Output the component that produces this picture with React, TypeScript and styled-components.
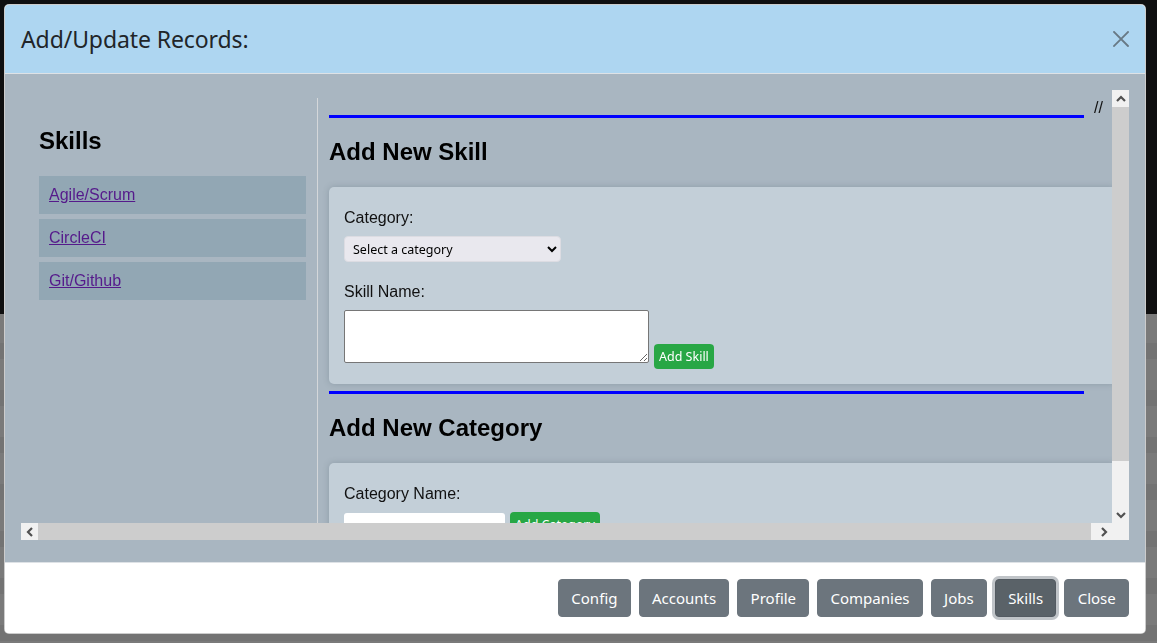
import React from 'react';
import styled, { createGlobalStyle } from 'styled-components';

const GlobalStyle = createGlobalStyle`
  html, body {
    margin: 0;
    padding: 0;
    height: 100%;
    overflow: hidden;
  }
  body {
    font-family: 'Liberation Sans', Arial, sans-serif;
  }
`;

const Page = styled.div`
  height: 643px;
  display: flex;
  flex-direction: column;
`;

const PageTop = styled.div`
  height: 314px;
  background: #0f0f10;
`;

const PageRest = styled.div`
  flex: 1;
  background: repeating-linear-gradient(
    to bottom,
    #7a7a7a 0px,
    #7a7a7a 31px,
    #737373 31px,
    #737373 47px
  );
  background-position: 0 -2px;
`;

const Overlay = styled.div`
  position: fixed;
  inset: 0;
  display: flex;
  align-items: flex-start;
  padding: 4px 0 0 4px;
`;

const Modal = styled.div`
  width: 1142px;
  background: #fff;
  border: 1px solid rgba(0, 0, 0, 0.2);
  border-radius: 5px;
  overflow: hidden;
  display: flex;
  flex-direction: column;
  box-sizing: border-box;
`;

const Header = styled.div`
  height: 69px;
  box-sizing: border-box;
  background: #aed6f1;
  border-bottom: 1px solid #dee2e6;
  display: flex;
  align-items: center;
  justify-content: space-between;
  padding: 0 15px 0 16px;
`;

const Title = styled.h5`
  margin: 0;
  font-family: 'Noto Sans', 'Open Sans', sans-serif;
  font-weight: 400;
  font-size: 23px;
  color: #212529;
  letter-spacing: -0.1px;
`;

const CloseX = styled.button`
  border: none;
  background: transparent;
  padding: 0;
  width: 18px;
  height: 18px;
  display: flex;
  align-items: center;
  justify-content: center;
  cursor: pointer;
`;

const Body = styled.div`
  background: #a9b6c1;
  padding: 16px 16px 22px 16px;
`;

/* scroll area: viewport plus drawn scrollbars */
const ScrollFrame = styled.div`
  height: 450px;
  display: grid;
  grid-template-columns: 1fr 17px;
  grid-template-rows: 1fr 17px;
`;

const Viewport = styled.div`
  overflow: hidden;
  min-width: 0;
  min-height: 0;
`;

const Bar = styled.div<{ $vertical?: boolean }>`
  display: flex;
  flex-direction: ${(p) => (p.$vertical ? 'column' : 'row')};
  background: #f1f1f1;
`;

const ArrowButton = styled.div`
  flex: none;
  width: 17px;
  height: 17px;
  display: flex;
  align-items: center;
  justify-content: center;
  background: #f1f1f1;
`;

const Thumb = styled.div<{ $vertical?: boolean; $size: number }>`
  flex: none;
  background: #cdcdcd;
  ${(p) => (p.$vertical ? `height: ${p.$size}px;` : `width: ${p.$size}px;`)}
`;

const Track = styled.div`
  flex: 1;
`;

const Corner = styled.div`
  background: #f1f1f1;
`;

const chevrons: Record<string, string> = {
  up: 'M1 6 L5 2 L9 6',
  down: 'M1 2 L5 6 L9 2',
  left: 'M6 1 L2 5 L6 9',
  right: 'M2 1 L6 5 L2 9',
};

const Chevron = ({ dir }: { dir: 'up' | 'down' | 'left' | 'right' }) => {
  const flat = dir === 'up' || dir === 'down';
  return (
    <svg width={flat ? 10 : 8} height={flat ? 8 : 10} viewBox={flat ? '0 0 10 8' : '0 0 8 10'}>
      <path d={chevrons[dir]} fill="none" stroke="#505050" strokeWidth="2.2" />
    </svg>
  );
};

const Row = styled.div`
  width: calc(100% + 4px);
  display: flex;
  margin-top: 8px;
`;

const Sidebar = styled.div`
  width: 297px;
  flex: none;
  box-sizing: border-box;
  padding: 29px 11px 0 18px;
  border-right: 1px solid #d4d7da;
`;

const SideTitle = styled.h3`
  margin: 0 0 21px 0;
  font-size: 24px;
  font-weight: 700;
  color: #000;
`;

const SkillList = styled.div`
  display: flex;
  flex-direction: column;
  gap: 5px;
`;

const SkillItem = styled.div`
  background: #92a7b4;
  padding: 10px;
  font-size: 16px;
  line-height: 18px;
`;

const SkillLink = styled.a`
  color: #551a8b;
  text-decoration: underline;
`;

const Main = styled.div`
  flex: 1;
  min-width: 0;
  padding: 0 0 20px 11px;
`;

const Rule = styled.div<{ $top?: number }>`
  display: flex;
  align-items: flex-end;
  margin-top: ${(p) => p.$top ?? 0}px;
  padding-right: 13px;
`;

const BlueLine = styled.div<{ $trail?: number }>`
  flex: 1;
  height: 3px;
  background: #0000ff;
  margin-right: ${(p) => p.$trail ?? 0}px;
`;

const RuleNote = styled.span`
  margin-left: 10px;
  font-size: 16px;
  line-height: 18px;
  color: #111;
  position: relative;
  top: -1px;
`;

const SectionTitle = styled.h2`
  margin: 20px 0 21px 0;
  font-size: 24px;
  font-weight: 700;
  line-height: 28px;
  color: #000;
`;

const Card = styled.div`
  background: #c3cfd8;
  border-radius: 5px;
  box-shadow: 0 0 6px rgba(60, 80, 95, 0.25);
  padding: 22px 15px 21px 15px;
  margin-bottom: 7px;
`;

const Field = styled.div<{ $gap?: number }>`
  margin-bottom: ${(p) => p.$gap ?? 0}px;
`;

const Label = styled.label`
  display: block;
  font-size: 16px;
  line-height: 18px;
  color: #111;
  margin-bottom: 9px;
`;

const Select = styled.select`
  display: block;
  width: 217px;
  height: 26px;
  border: 1px solid #dcdce2;
  border-radius: 4px;
  background: #e9e8ee;
  font-family: 'Noto Sans', 'Open Sans', sans-serif;
  font-size: 12.5px;
  color: #000;
  padding: 0 4px;
`;

const InputLine = styled.div`
  display: flex;
  align-items: flex-end;
  gap: 5px;
`;

const TextArea = styled.textarea`
  display: block;
  width: 305px;
  height: 53px;
  box-sizing: border-box;
  border: 1px solid #767676;
  border-radius: 2px;
  background: #fff;
  resize: both;
  margin: 0;
`;

const TextInput = styled.input`
  width: 161px;
  height: 24px;
  box-sizing: border-box;
  border: none;
  border-radius: 3px;
  background: #fff;
  margin: 0;
`;

const GreenButton = styled.button<{ $drop?: number }>`
  background: #28a745;
  color: #fff;
  border: none;
  border-radius: 4px;
  font-family: 'Noto Sans', 'Open Sans', sans-serif;
  font-size: 12.5px;
  height: 25px;
  padding: 0 5px;
  margin-bottom: ${(p) => -(p.$drop ?? 0)}px;
  cursor: pointer;
`;

const Footer = styled.div`
  border-top: 1px solid #dee2e6;
  background: #fff;
  padding: 12px;
  display: flex;
  justify-content: flex-end;
  align-items: center;
`;

const NavButton = styled.button<{ $active?: boolean }>`
  margin: 4px;
  height: 38px;
  padding: 0 12.25px;
  border-radius: 4px;
  border: 1px solid ${(p) => (p.$active ? '#545b62' : '#6c757d')};
  background: ${(p) => (p.$active ? '#5a6268' : '#6c757d')};
  color: #fff;
  font-family: 'Noto Sans', 'Open Sans', sans-serif;
  font-size: 15px;
  cursor: pointer;
  box-shadow: ${(p) => (p.$active ? '0 0 0 3px rgba(171, 176, 181, 0.75)' : 'none')};
`;

const skills = ['Agile/Scrum', 'CircleCI', 'Git/Github'];
const navItems = ['Config', 'Accounts', 'Profile', 'Companies', 'Jobs', 'Skills', 'Close'];

export default function App() {
  return (
    <>
      <GlobalStyle />
      <Page>
        <PageTop />
        <PageRest />
      </Page>
      <Overlay>
        <Modal>
          <Header>
            <Title>Add/Update Records:</Title>
            <CloseX aria-label="Close">
              <svg width="16" height="16" viewBox="0 0 16 16">
                <path d="M1 1 L15 15 M15 1 L1 15" stroke="#687985" strokeWidth="1.8" strokeLinecap="square" />
              </svg>
            </CloseX>
          </Header>
          <Body>
            <ScrollFrame>
              <Viewport>
                <Row>
                  <Sidebar>
                    <SideTitle>Skills</SideTitle>
                    <SkillList>
                      {skills.map((s) => (
                        <SkillItem key={s}>
                          <SkillLink href="#">{s}</SkillLink>
                        </SkillItem>
                      ))}
                    </SkillList>
                  </Sidebar>
                  <Main>
                    <Rule $top={2}>
                      <BlueLine />
                      <RuleNote>//</RuleNote>
                    </Rule>
                    <SectionTitle>Add New Skill</SectionTitle>
                    <Card>
                      <Field $gap={21}>
                        <Label>Category:</Label>
                        <Select defaultValue="">
                          <option value="">Select a category</option>
                        </Select>
                      </Field>
                      <Field>
                        <Label>Skill Name:</Label>
                        <InputLine>
                          <TextArea />
                          <GreenButton $drop={6}>Add Skill</GreenButton>
                        </InputLine>
                      </Field>
                    </Card>
                    <Rule>
                      <BlueLine $trail={19} />
                    </Rule>
                    <SectionTitle>Add New Category</SectionTitle>
                    <Card>
                      <Field>
                        <Label>Category Name:</Label>
                        <InputLine>
                          <TextInput />
                          <GreenButton>Add Category</GreenButton>
                        </InputLine>
                      </Field>
                    </Card>
                  </Main>
                </Row>
              </Viewport>
              <Bar $vertical>
                <ArrowButton>
                  <Chevron dir="up" />
                </ArrowButton>
                <Thumb $vertical $size={354} />
                <Track />
                <ArrowButton>
                  <Chevron dir="down" />
                </ArrowButton>
              </Bar>
              <Bar>
                <ArrowButton>
                  <Chevron dir="left" />
                </ArrowButton>
                <Thumb $size={1053} />
                <Track />
                <ArrowButton>
                  <Chevron dir="right" />
                </ArrowButton>
              </Bar>
              <Corner />
            </ScrollFrame>
          </Body>
          <Footer>
            {navItems.map((n) => (
              <NavButton key={n} $active={n === 'Skills'}>
                {n}
              </NavButton>
            ))}
          </Footer>
        </Modal>
      </Overlay>
    </>
  );
}
